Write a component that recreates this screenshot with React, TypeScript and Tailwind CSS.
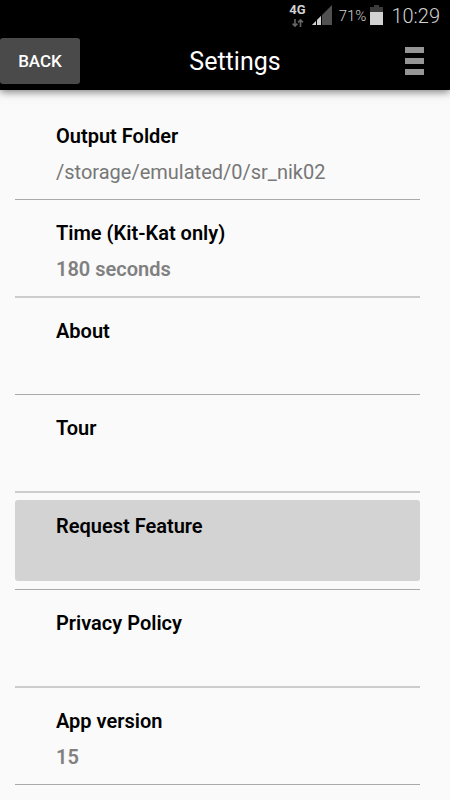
import React from 'react';

interface Setting {
  title: string;
  value?: string;
  light?: boolean;
  active?: boolean;
}

const settings: Setting[] = [
  { title: 'Output Folder', value: '/storage/emulated/0/sr_nik02', light: true },
  { title: 'Time (Kit-Kat only)', value: '180 seconds' },
  { title: 'About' },
  { title: 'Tour' },
  { title: 'Request Feature', active: true },
  { title: 'Privacy Policy' },
  { title: 'App version', value: '15' },
];

export default function App() {
  return (
    <div className="min-h-screen bg-[#fafafa] font-[Roboto,sans-serif]">
      <header className="bg-black shadow-[0_2px_8px_rgba(0,0,0,0.5)]">
        <StatusBar />
        <div className="grid h-[58px] grid-cols-[1fr_auto_1fr] items-center">
          <button className="h-[46px] w-20 rounded-[3px] bg-[#4a4a4a] text-[17px] font-medium leading-6 text-white">BACK</button>
          <h1 className="pl-5 pt-[2px] text-[25px] leading-8 text-white">Settings</h1>
          <button aria-label="Menu" className="mr-[26px] flex flex-col gap-[5px] justify-self-end">
            <span className="h-[6px] w-[19px] bg-[#969696]" />
            <span className="h-[6px] w-[19px] bg-[#969696]" />
            <span className="h-[6px] w-[19px] bg-[#969696]" />
          </button>
        </div>
      </header>

      <main className="pl-[15px] pr-[30px] pt-[13px]">
        <ul>
          {settings.map(s => (
            <SettingRow key={s.title} {...s} />
          ))}
        </ul>
      </main>
    </div>
  );
}

function StatusBar() {
  return (
    <div className="flex h-8 items-center justify-end pr-[10px] text-[#d2d2d2]">
      <div className="mr-[6px] flex flex-col items-center">
        <span className="text-[13px] font-bold leading-[14px]">4G</span>
        <svg className="h-3 w-3" viewBox="0 0 12 12" fill="none" stroke="#666" strokeWidth="1.6">
          <path d="M3 2v7M.6 6.600 3 9l2.400-2.400M8.500 10V3M6.100 5.400 8.500 3l2.400 2.400" />
        </svg>
      </div>
      <svg className="mr-[7px] h-[22px] w-5" viewBox="0 0 20 22">
        <path d="M20 0v20H0z" fill="#505050" />
        <path d="M9 11v9H0z" fill="#d0d0d0" />
        <path d="M4.500 14v6M9.500 10v10" stroke="#000" />
      </svg>
      <span className="text-[15px] font-light leading-6">71%</span>
      <svg className="ml-1 h-[22px] w-[13px]" viewBox="0 0 13 22">
        <path d="M4 0h5v2h4v6H0V2h4z" fill="#3c3c3c" />
        <path d="M0 7h13v13H0z" fill="#d2d2d2" />
      </svg>
      <span className="ml-2 text-[20px] font-light leading-6">10:29</span>
    </div>
  );
}

function SettingRow({ title, value, light, active }: Setting) {
  return (
    <li className="border-b border-[#aaa] pb-2 pt-[7px] even:border-b-2 even:border-[#ccc]">
      <button className={`flex h-[81px] w-full flex-col gap-3 rounded-[3px] px-[41px] pt-[14px] text-left text-[20px] leading-6 ${active ? 'bg-[#d3d3d3]' : ''}`}>
        <span className="font-semibold text-black">{title}</span>
        {value && <span className={light ? 'text-[#777]' : 'font-semibold text-[#808080]'}>{value}</span>}
      </button>
    </li>
  );
}
